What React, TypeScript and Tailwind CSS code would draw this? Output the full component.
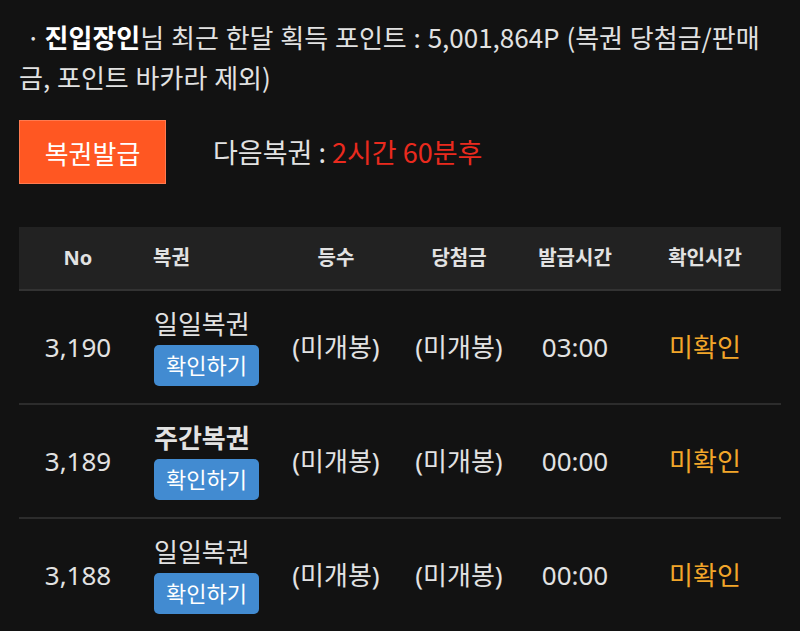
const rows = [
  { no: "3,190", name: "일일복권", bold: false, rank: "(미개봉)", prize: "(미개봉)", issued: "03:00", checked: "미확인" },
  { no: "3,189", name: "주간복권", bold: true, rank: "(미개봉)", prize: "(미개봉)", issued: "00:00", checked: "미확인" },
  { no: "3,188", name: "일일복권", bold: false, rank: "(미개봉)", prize: "(미개봉)", issued: "00:00", checked: "미확인" },
];

const cols = "grid grid-cols-[118px_138px_122px_124px_108px_152px]";

export default function App() {
  return (
    <div
      className="min-h-[631px] bg-[#121212] text-[#e2e2e2] px-[19px] pt-[17px] overflow-hidden"
      style={{ fontFamily: '"Noto Sans CJK KR", "Noto Sans", sans-serif' }}
    >
      <p className="text-[26px] leading-[40px] [word-spacing:1px]">
        <span className="pl-[7px] pr-[4px]">·</span>
        <b className="font-bold text-white">진입장인</b>님 최근 한달 획득 포인트 : 5,001,864P (복권 당첨금/판매금, 포인트 바카라 제외)
      </p>

      <div className="flex items-center mt-[23px]">
        <button className="w-[147px] h-[64px] bg-[#ff5722] text-white text-[26px] border border-[#ff7a50]">
          복권발급
        </button>
        <div className="ml-[47px] text-[27px]">
          다음복권 : <span className="text-[#ea2a1e]">2시간 60분후</span>
        </div>
      </div>

      <div
        className="mt-[43px] w-[762px]"
        style={{ fontFamily: '"Noto Sans", "Noto Sans CJK KR", sans-serif' }}
      >
        <div className={`${cols} h-[64px] bg-[#222222] border-b-2 border-[#333333] items-center text-[20px] font-bold`}>
          <div className="text-center">No</div>
          <div className="pl-[16px]">복권</div>
          <div className="text-center">등수</div>
          <div className="text-center">당첨금</div>
          <div className="text-center">발급시간</div>
          <div className="text-center">확인시간</div>
        </div>
        {rows.map((r) => (
          <div key={r.no} className={`${cols} h-[114px] border-b-2 border-[#2c2c2c] items-center text-[26px]`}>
            <div className="text-center">{r.no}</div>
            <div className="pl-[17px] flex flex-col items-start">
              <span className={`leading-[32px] ${r.bold ? "font-bold" : ""}`}>{r.name}</span>
              <span className="mt-[5px] h-[41px] w-[105px] rounded-[5px] bg-[#428bd1] text-white text-[22px] leading-[41px] text-center">
                확인하기
              </span>
            </div>
            <div className="text-center">{r.rank}</div>
            <div className="text-center">{r.prize}</div>
            <div className="text-center">{r.issued}</div>
            <div className="text-center text-[#f2a62a]">{r.checked}</div>
          </div>
        ))}
      </div>
    </div>
  );
}
